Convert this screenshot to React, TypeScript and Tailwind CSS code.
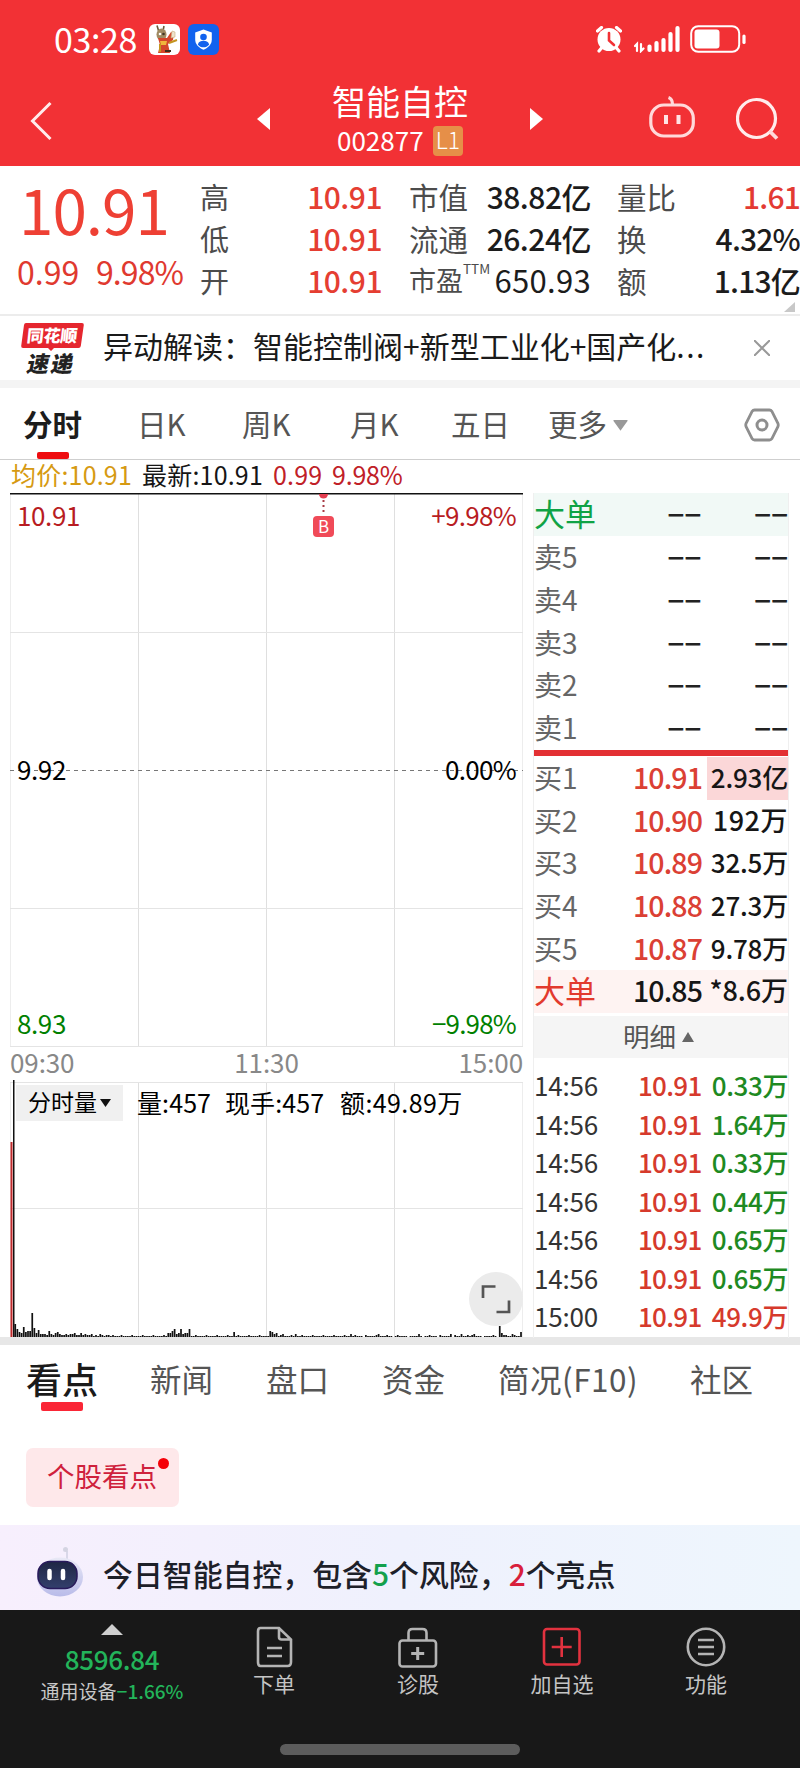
import React from "react";

type Quote = { label: string; value: string; tone?: string; note?: string };

const highLow: Quote[] = [
  { label: "高", value: "10.91" },
  { label: "低", value: "10.91" },
  { label: "开", value: "10.91" },
];
const market: Quote[] = [
  { label: "市值", value: "38.82亿", tone: "font-medium tracking-[-0.5px]" },
  { label: "流通", value: "26.24亿", tone: "font-medium tracking-[-0.5px]" },
  { label: "市盈", value: "650.93", note: "TTM", tone: "text-[31px] tracking-[0.3px]" },
];
const ratio: Quote[] = [
  { label: "量比", value: "1.61", tone: "text-[#e33a33]" },
  { label: "换", value: "4.32%", tone: "text-[#1c1c1c]" },
  { label: "额", value: "1.13亿", tone: "text-[#1c1c1c]" },
];
const sells = ["卖5", "卖4", "卖3", "卖2", "卖1"];
const buys = [
  ["买1", "10.91", "2.93亿"],
  ["买2", "10.90", "192万"],
  ["买3", "10.89", "32.5万"],
  ["买4", "10.88", "27.3万"],
  ["买5", "10.87", "9.78万"],
];
const ticks = [
  ["14:56", "10.91", "0.33万"],
  ["14:56", "10.91", "1.64万"],
  ["14:56", "10.91", "0.33万"],
  ["14:56", "10.91", "0.44万"],
  ["14:56", "10.91", "0.65万"],
  ["14:56", "10.91", "0.65万"],
  ["15:00", "10.91", "49.9万"],
];

const opening = [13, 8, 5, 4, 10, 5, 6, 6, 24, 9, 4, 7, 3, 3, 3, 2, 6, 3, 2, 4, 5, 3, 2, 2, 3, 2, 3, 3, 4, 2, 2, 4, 2, 3, 2, 2, 3, 1, 2, 1, 3, 2, 1, 2, 2, 1, 2];
const spikes: Record<number, number> = {
  72: 4, 73: 4, 74: 6, 75: 8, 76: 3, 77: 4, 78: 8, 79: 3, 80: 4, 81: 4, 82: 8,
  103: 5, 120: 6, 121: 5, 122: 3, 123: 4, 126: 3, 130: 2, 132: 3,
  158: 3, 171: 3, 190: 3, 205: 3, 207: 2, 210: 3, 213: 2, 216: 3,
  228: 11, 229: 4, 231: 2, 234: 3, 238: 5,
};
const volume: number[] = Array.from({ length: 239 }, (_, i) => {
  if (i < opening.length) return opening[i];
  if (spikes[i]) return spikes[i];
  if (i > 160 && i % 7 === 3) return 0;
  return i % 5 === 0 ? 2 : 1;
});

function StatusBar() {
  return (
    <div className="flex h-[78px] items-center pl-[54px]">
      <span className="w-[95px] text-[34px] leading-[70px] tracking-[-0.4px] text-white">03:28</span>
      <svg width="31" height="31" viewBox="0 0 31 31">
        <rect width="31" height="31" rx="6" fill="#fff" />
        <path d="M8 1.5l1.5 5M15 2l-1 5" stroke="#6b5a3c" strokeWidth="1.6" />
        <ellipse cx="12.5" cy="10.5" rx="5" ry="6" fill="#a08a62" />
        <circle cx="11" cy="10" r="1.3" fill="#fff" />
        <circle cx="14.5" cy="10" r="1.3" fill="#423626" />
        <path d="M9 14h9l4-6 3 1-1 7-5 4 2 9H9l2-8z" fill="#d4462b" />
        <path d="M11 17h7l-1 4h-5z" fill="#f0b63c" />
        <path d="M23 7l3 1v5l-4 1z" fill="#eee3cc" stroke="#c9ad7c" strokeWidth=".6" />
        <path d="M11 20v8M20 19l8-3" stroke="#c4941f" strokeWidth="2" />
        <path d="M16 27h6" stroke="#3d2b1b" strokeWidth="2" />
      </svg>
      <svg className="ml-[8px]" width="31" height="31" viewBox="0 0 31 31">
        <rect width="31" height="31" rx="6" fill="#1262ee" />
        <path d="M15.5 5.5l8.3 3v7c0 5-3.5 8-8.3 10.300C10.700 23.500 7.200 20.500 7.200 15.500v-7z" fill="#fff" />
        <circle cx="15.500" cy="13" r="3.300" fill="#1262ee" />
        <path d="M9.800 20.500c1-3 3.300-3.700 5.700-3.700s4.700.7 5.700 3.700c-1.600 2-3.500 2.800-5.700 2.800s-4.200-.8-5.700-2.800z" fill="#1262ee" />
      </svg>
      <svg className="ml-[377px]" width="26" height="27" viewBox="0 0 26 27">
        <circle cx="13" cy="13.500" r="11.500" fill="#fff" />
        <path d="M1.500 5l4-3.500M24.500 5l-4-3.500M5.500 22l-2.500 3M20.500 22l2.500 3" stroke="#fff" strokeWidth="3.200" strokeLinecap="round" />
        <path d="M13 7v7.500l5 4.500" stroke="#f23135" strokeWidth="2.600" fill="none" strokeLinecap="round" />
      </svg>
      <svg className="ml-[12px]" width="47" height="28" viewBox="0 0 47 28">
        <g stroke="#fff" strokeLinecap="round">
          <path strokeWidth="2.200" fill="none" d="M1 21l2-2v7M7 19v7l2.500-2.500" />
          <path strokeWidth="4.200" d="M15.500 21.500v3.500M22.500 18v7M29.500 15v10M36.500 9v16M43.500 3v22" />
        </g>
      </svg>
      <svg className="ml-[9px]" width="56" height="28" viewBox="0 0 56 28">
        <rect x="1.200" y="1.200" width="48" height="25.600" rx="7" fill="none" stroke="#fff" strokeWidth="2" />
        <rect x="4.500" y="4.500" width="25" height="19" rx="3" fill="#fff" />
        <path d="M54 11v6.500" stroke="#fff" strokeWidth="3.200" strokeLinecap="round" />
      </svg>
    </div>
  );
}

function TitleBar() {
  return (
    <div className="flex h-[88px] pl-[30px]">
      <svg className="mt-[23px]" width="22" height="40" viewBox="0 0 22 40">
        <path d="M20.500 2L2.500 20l18 18" fill="none" stroke="#ffecec" strokeWidth="3" />
      </svg>
      <svg className="ml-[205px] mt-[30px]" width="13" height="22" viewBox="0 0 13 22">
        <path d="M13 0v22L0 11z" fill="#fff" />
      </svg>
      <div className="ml-[62px] w-[138px] text-white">
        <div className="h-[46px] whitespace-nowrap text-[34px] leading-[46px]">智能自控</div>
        <div className="mt-[1px] flex h-[32px] items-center pl-[5px]">
          <span className="w-[96px] text-[26px] leading-[24px]">
            <span className="relative top-[-1px]">002877</span>
          </span>
          <span className="h-[30px] w-[30px] rounded-[4px] bg-[#e68f48] text-center text-[23px] font-light leading-[27px]">L1</span>
        </div>
      </div>
      <svg className="ml-[60px] mt-[30px]" width="13" height="22" viewBox="0 0 13 22">
        <path d="M0 0v22l13-11z" fill="#fff" />
      </svg>
      <svg className="ml-[106px] mt-[18px]" width="46" height="42" viewBox="0 0 46 42">
        <g fill="none" stroke="#ffd9da" strokeWidth="3.200">
          <rect x="1.800" y="9" width="42.500" height="31" rx="13" />
          <path d="M19.500 1.500c3 1 4 3.500 4 7" />
        </g>
        <path d="M17 19v9M29.500 19v9" stroke="#ffe3e4" strokeWidth="4" />
      </svg>
      <svg className="ml-[41px] mt-[19px]" width="43" height="44" viewBox="0 0 43 44">
        <circle cx="20.500" cy="21.500" r="19" fill="none" stroke="#ffecec" strokeWidth="3.200" />
        <path d="M33.500 34l7.500 7.500" stroke="#ffd9da" strokeWidth="3.800" />
      </svg>
    </div>
  );
}

function QuotePanel() {
  return (
    <div className="flex h-[150px] border-b-2 border-[#ececec] pt-[9px] text-[30px] text-[#4c4c4c]">
      <div className="w-[200px] text-[#ee4034]">
        <div className="h-[67px] pl-[19px] text-[62px] leading-[66px] tracking-[-1px]">10.91</div>
        <div className="flex pl-[17px] text-[32px] leading-[58px] text-[#e0392f]">
          <span className="w-[79px]">0.99</span>
          <span className="tracking-[-0.9px]">9.98%</span>
        </div>
      </div>
      <div className="w-[182px] leading-[42px]">
        {highLow.map((q) => (
          <div key={q.label} className="flex h-[42px] justify-between">
            <span className="text-[29px]">{q.label}</span>
            <span className="font-medium tracking-[-0.5px] text-[#e53e32]">{q.value}</span>
          </div>
        ))}
      </div>
      <div className="ml-[27px] w-[182px] leading-[42px]">
        {market.map((q) => (
          <div key={q.label} className="flex h-[42px] justify-between">
            <span className={q.note ? "flex text-[27px]" : "text-[29.500px]"}>
              {q.label}
              {q.note && <span className="text-[13.500px] leading-[18px]">{q.note}</span>}
            </span>
            <span className={`whitespace-nowrap text-[#1c1c1c] ${q.tone}`}>{q.value}</span>
          </div>
        ))}
      </div>
      <div className="relative ml-[26px] w-[183px] leading-[42px]">
        {ratio.map((q) => (
          <div key={q.label} className="flex h-[42px] justify-between">
            <span className="text-[29.500px]">{q.label}</span>
            <span className={`font-medium tracking-[-0.8px] ${q.tone}`}>{q.value}</span>
          </div>
        ))}
        <svg className="absolute right-[5px] top-[127px]" width="11" height="10" viewBox="0 0 11 10">
          <path d="M11 0v10H0z" fill="#c8c8c8" />
        </svg>
      </div>
    </div>
  );
}

function NewsRow() {
  return (
    <div className="flex h-[64px] items-center pl-[21px]">
      <div className="relative h-[51px] w-[63px]">
        <svg className="absolute inset-0" width="63" height="51" viewBox="0 0 63 51">
          <path d="M5 0h56q2 0 1.800 2l-3 21q-.3 2-2.300 2H33l-3 3-3-3H2q-2 0-1.800-2L3 2q.3-2 2-2z" fill="#e5262e" />
        </svg>
        <div className="absolute left-[6px] top-[1px] -skew-x-6 text-[17px] font-black leading-[22px] tracking-[-0.3px] text-white">同花顺</div>
        <div className="absolute left-[7px] top-[27px] -skew-x-12 whitespace-nowrap text-[22px] font-black leading-[24px] tracking-[2px] text-[#222]">速递</div>
      </div>
      <div className="ml-[19px] h-[56px] w-[620px] whitespace-nowrap text-[30px] leading-[51px] text-[#1a1a1a]">
        异动解读：智能控制阀+新型工业化+国产化<span className="tracking-[1.500px]">...</span>
      </div>
      <svg className="ml-[31px]" width="16" height="16" viewBox="0 0 16 16">
        <path d="M0 0l16 16M16 0L0 16" stroke="#999" strokeWidth="2" />
      </svg>
    </div>
  );
}

function PeriodTabs() {
  return (
    <div className="flex h-[72px] border-b border-[#cfcfcf] pl-[23px] text-[29.500px] leading-[71px] text-[#555]">
      <div className="relative w-[114px] font-bold text-[#1c1c1c]">
        分时
        <div className="absolute left-[14px] top-[64px] h-[7px] w-[32px] rounded-[2px] bg-[#ee0d10]" />
      </div>
      <div className="w-[105px]">日K</div>
      <div className="w-[108px]">周K</div>
      <div className="w-[101px]">月K</div>
      <div className="w-[97px]">五日</div>
      <div className="w-[65px]">更多</div>
      <svg className="mt-[32px]" width="15" height="11" viewBox="0 0 15 11">
        <path d="M1 0h13q1 0 .5 1L8 10q-.5 1-1 0L.5 1Q0 0 1 0z" fill="#999" />
      </svg>
      <svg className="ml-[116px] mt-[20px]" width="36" height="34" viewBox="0 0 36 34">
        <path d="M10.500 2h15q1.500 0 2.300 1.200l6 12q.9 1.800 0 3.600l-6 12Q27 32 25.500 32h-15Q9 32 8.200 30.800l-6-12q-.9-1.800 0-3.600l6-12Q9 2 10.500 2z" fill="none" stroke="#8e8e8e" strokeWidth="2.800" />
        <circle cx="18" cy="17" r="5" fill="none" stroke="#8e8e8e" strokeWidth="3" />
      </svg>
    </div>
  );
}

function PriceChart() {
  return (
    <div className="relative h-[554px] text-[26px] leading-[32px] tracking-[-0.4px]">
      <svg className="absolute inset-0" width="513" height="554" viewBox="0 0 513 554">
        <path d="M.5 0v554M512.500 0v554" stroke="#ededed" />
        <path d="M128.500 0v554M256.500 0v554M384.500 0v554" stroke="#dfdfdf" />
        <path d="M0 139.500h513M0 415.500h513M0 553.500h513" stroke="#e4e4e4" />
        <path d="M0 277.500h513" stroke="#777" strokeDasharray="4 4" />
        <path d="M0 .75h513" stroke="#111" strokeWidth="1.500" />
        <path d="M313.500 7v15" stroke="#a83b45" strokeWidth="2" strokeDasharray="2 3" />
        <path d="M309 1h9a4.500 4.500 0 0 1-9 0z" fill="#e33e50" />
      </svg>
      <div className="absolute left-[7px] top-[6px] text-[#b81c22]">10.91</div>
      <div className="absolute right-[7px] top-[6px] tracking-[-0.7px] text-[#b81c22]">+9.98%</div>
      <div className="absolute left-[303px] top-[23px] h-[21px] w-[21px] rounded-[4px] bg-[#f04a58] text-center text-[17px] leading-[20px] text-white">B</div>
      <div className="absolute left-[7px] top-[260px] text-black">9.92</div>
      <div className="absolute right-[7px] top-[260px] tracking-[-0.7px] text-black">0.00%</div>
      <div className="absolute left-[7px] top-[514px] text-[#008000]">8.93</div>
      <div className="absolute right-[7px] top-[514px] tracking-[-0.8px] text-[#008000]">−9.98%</div>
    </div>
  );
}

function VolumeChart() {
  return (
    <div className="relative h-[257px]">
      <svg className="absolute inset-0" width="513" height="257" viewBox="0 0 513 257">
        <path d="M.5 2v255M512.500 2v255" stroke="#ededed" />
        <path d="M128.500 2v255M256.500 2v255M384.500 2v255" stroke="#dfdfdf" />
        <path d="M0 2.500h513M0 128.500h513" stroke="#e4e4e4" />
        <rect x="0.500" y="62" width="2" height="195" fill="#c0292b" />
        <rect x="3" y="0" width="1.500" height="257" fill="#111" />
        {volume.map((h, i) => (
          <rect key={i} x={4.400 + i * 2.125} y={257 - h} width="1.700" height={h} fill="#111" />
        ))}
      </svg>
      <div className="absolute left-[6px] top-[5px] flex h-[36px] w-[107px] items-center bg-[#f0f0f0] pl-[12px] text-[23px] leading-[28px] text-black">
        <span className="relative top-[-2px]">分时量</span>
        <svg className="ml-[3px]" width="11" height="8" viewBox="0 0 11 8">
          <path d="M0 0h11L5.500 8z" fill="#111" />
        </svg>
      </div>
      <div className="absolute left-[127px] top-[5px] flex whitespace-nowrap text-[25px] leading-[34px] tracking-[0.1px] text-black">
        <span className="w-[88px]">量:457</span>
        <span className="w-[115px]">现手:457</span>
        <span className="tracking-[0.4px]">额:49.89万</span>
      </div>
      <svg className="absolute left-[459px] top-[192px]" width="54" height="54" viewBox="0 0 54 54">
        <circle cx="27" cy="27" r="27" fill="#ebebeb" />
        <path d="M14 26V14.500h12.500M40 28.500V40H27.500" fill="none" stroke="#555" strokeWidth="2.700" />
      </svg>
    </div>
  );
}

function Blank() {
  return (
    <>
      <span className="w-[87px] whitespace-nowrap text-[29.500px] font-medium text-[#222]">−−</span>
      <span className="whitespace-nowrap text-[29.500px] font-medium text-[#222]">−−</span>
    </>
  );
}

function OrderBook() {
  return (
    <div className="ml-[10px] mt-[33px] h-[845px] w-[256px] border-x border-[#efefef] text-[28px] text-[#666]">
      <div className="flex h-[43px] bg-[#f1f9f6] leading-[40px]">
        <span className="w-[134px] text-[31px] leading-[39px] text-[#0fa345]">大单</span>
        <Blank />
      </div>
      {sells.map((s) => (
        <div key={s} className="flex h-[42.800px] leading-[40px]">
          <span className="w-[134px]">{s}</span>
          <Blank />
        </div>
      ))}
      <div className="h-[6px] bg-[#e33033]" />
      <div className="h-[1px]" />
      {buys.map(([label, price, amount], i) => (
        <div key={label} className="flex h-[42.700px] leading-[40px]">
          <span className="w-[99px]">{label}</span>
          <span className="w-[74px] whitespace-nowrap text-[28.500px] font-medium tracking-[-0.9px] text-[#db4034]">{price}</span>
          <span className={`flex-1 whitespace-nowrap text-right font-medium text-[#161616] ${i === 1 ? "text-[27px] tracking-[0.5px]" : "text-[26px] tracking-[-0.2px]"} ${i === 0 ? "bg-[#fbd7d8]" : ""}`}>{amount}</span>
        </div>
      ))}
      <div className="flex h-[43px] bg-[#fef3f2] leading-[40px]">
        <span className="w-[99px] text-[31px] leading-[39px] text-[#e23a2e]">大单</span>
        <span className="w-[74px] whitespace-nowrap text-[28.500px] font-medium tracking-[-0.900px] text-[#161616]">10.85</span>
        <span className="flex-1 whitespace-nowrap text-right text-[27px] font-medium tracking-[-0.100px] text-[#161616]">*8.6万</span>
      </div>
      <div className="mt-[3px] flex h-[42px] items-center bg-[#f5f5f5] pl-[89px] text-[26.500px] leading-[38px] text-[#555]">
        <span className="relative top-[-1px]">明细</span>
        <svg className="ml-[6px]" width="12" height="10" viewBox="0 0 12 10">
          <path d="M6 0l6 10H0z" fill="#666" />
        </svg>
      </div>
      <div className="mt-[8px] text-[26px] font-medium leading-[38px]">
        {ticks.map(([time, price, amount], i) => (
          <div key={i} className="flex h-[38.500px] tracking-[-0.4px]">
            <span className="w-[104px] font-normal tracking-[-0.2px] text-[#333]">{time}</span>
            <span className="w-[66px] tracking-[-0.7px] text-[#d63a2c]">{price}</span>
            <span className={`flex-1 whitespace-nowrap text-right ${i === 6 ? "text-[#d63a2c]" : "text-[#1e8a22]"}`}>{amount}</span>
          </div>
        ))}
      </div>
    </div>
  );
}

function InfoTabs() {
  return (
    <div className="h-[180px]">
      <div className="flex h-[103px] pl-[26px] text-[31.500px] leading-[67px] text-[#555]">
        <div className="relative w-[124px] text-[36px] font-medium text-[#1a1a1a]">
          看点
          <div className="absolute left-[15px] top-[57px] h-[9px] w-[42px] rounded-[2px] bg-[#fa2636]" />
        </div>
        <div className="w-[116px]">新闻</div>
        <div className="w-[116px]">盘口</div>
        <div className="w-[116px]">资金</div>
        <div className="w-[192px] tracking-[0.5px]">简况(F10)</div>
        <div>社区</div>
      </div>
      <div className="relative ml-[26px] h-[59px] w-[153px] rounded-[7px] bg-[#fee8ea] pl-[21px] text-[27.500px] leading-[55px] text-[#cf213c]">
        个股看点
        <div className="absolute left-[132px] top-[10px] h-[11px] w-[11px] rounded-full bg-[#f50008]" />
      </div>
    </div>
  );
}

function Insight() {
  return (
    <div className="flex h-[85px] bg-gradient-to-r from-[#f7effd] via-[#eff1fd] to-[#eef6fd] pl-[36px]">
      <svg className="mt-[21px]" width="48" height="52" viewBox="0 0 48 52">
        <defs>
          <linearGradient id="shell" x1="0" y1="0" x2="0" y2="1">
            <stop offset="0" stopColor="#e9e9f6" />
            <stop offset="1" stopColor="#b9bbe9" />
          </linearGradient>
          <linearGradient id="face" x1="0" y1="0" x2="0" y2="1">
            <stop offset="0" stopColor="#1f2744" />
            <stop offset="1" stopColor="#333f6c" />
          </linearGradient>
        </defs>
        <path d="M31 5v9" stroke="#cfd0e2" strokeWidth="1.500" />
        <circle cx="29.500" cy="3.500" r="2.500" fill="#d4d4e2" />
        <ellipse cx="24" cy="31" rx="23" ry="19.500" fill="url(#shell)" />
        <rect x="2" y="15.500" width="39" height="27" rx="12" fill="url(#face)" stroke="#281a5b" strokeWidth="1.500" />
        <path d="M13.500 25v7M27 25v7" stroke="#fff" strokeWidth="4.500" strokeLinecap="round" />
      </svg>
      <div className="ml-[19px] whitespace-nowrap text-[29.900px] font-medium leading-[96px] text-[#1d2029]">
        今日智能自控，包含<span className="text-[#13a04c]">5</span>个风险，<span className="text-[#d81f3c]">2</span>个亮点
      </div>
    </div>
  );
}

function NavItem({ label, children }: { label: string; children: React.ReactNode }) {
  return (
    <div className="flex w-[144px] flex-col items-center pt-[16px] text-[21px] leading-[30px] text-[#c4c4c4]">
      <svg width="42" height="42" viewBox="0 0 42 42" fill="none" stroke="#b4b4b4" strokeWidth="2.600">
        {children}
      </svg>
      {label}
    </div>
  );
}

function BottomBar() {
  return (
    <div className="h-[158px] bg-[#181818]">
      <div className="flex h-[134px]">
        <div className="flex w-[202px] flex-col items-center pl-[22px] pt-[14px]">
          <svg width="22" height="11" viewBox="0 0 22 11">
            <path d="M11 0l11 11H0z" fill="#cfcfcf" />
          </svg>
          <div className="mt-[8px] text-[26px] font-medium leading-[32px] tracking-[-0.3px] text-[#23b45a]">8596.84</div>
          <div className="whitespace-nowrap text-[19px] leading-[32px] text-[#c8c8c8]">
            通用设备<span className="text-[19px] font-medium text-[#23b45a]">−1.66%</span>
          </div>
        </div>
        <NavItem label="下单">
          <path d="M7.500 2h18.500l12 11.500V36q0 4-3.500 4h-27Q5 40 5 36V5.500Q5 2 7.500 2zM26 2v9q0 2.500 2.500 2.500H38M14 22h15M14 30h15" />
        </NavItem>
        <NavItem label="诊股">
          <rect x="2.500" y="14.500" width="36.500" height="26" rx="3" />
          <path d="M11.500 14V7q0-4 4-4h10q4 0 4 4v7" />
          <path strokeWidth="3" d="M20.700 21v13M14.200 27.500h13" />
        </NavItem>
        <NavItem label="加自选">
          <g stroke="#e2323f">
            <rect x="3" y="3" width="35.500" height="35.500" rx="3" />
            <path d="M20.700 11v20M10.700 21h20" />
          </g>
        </NavItem>
        <NavItem label="功能">
          <circle cx="21" cy="21" r="18.200" />
          <path d="M13 14h16M13 21h16M13 28h16" />
        </NavItem>
      </div>
      <div className="mx-auto h-[11px] w-[240px] rounded-full bg-[#5c5c5c]" />
    </div>
  );
}

export default function App() {
  return (
    <div lang="zh-CN" className="h-[1768px] w-[800px] overflow-hidden bg-white font-['Noto_Sans_CJK_SC','Noto_Sans',sans-serif]">
      <header className="h-[166px] bg-[#f23135]">
        <StatusBar />
        <TitleBar />
      </header>
      <QuotePanel />
      <NewsRow />
      <div className="h-[8px] bg-[#f4f4f4]" />
      <PeriodTabs />
      <div className="flex h-[877px] pl-[10px]">
        <div className="w-[513px]">
          <div className="flex h-[33px] whitespace-nowrap pl-[1px] text-[25px] leading-[28px] tracking-[0.2px]">
            <span className="w-[131px] text-[#d69a12]">均价:10.91</span>
            <span className="w-[131px] text-[#161616]">最新:10.91</span>
            <span className="w-[59px] text-[#c02027]">0.99</span>
            <span className="tracking-[-0.2px] text-[#c02027]">9.98%</span>
          </div>
          <PriceChart />
          <div className="flex h-[33px] justify-between text-[26px] leading-[30px] tracking-[-0.1px] text-[#888]">
            <span>09:30</span>
            <span>11:30</span>
            <span>15:00</span>
          </div>
          <VolumeChart />
        </div>
        <OrderBook />
      </div>
      <div className="h-[8px] bg-[#e7e7e7]" />
      <InfoTabs />
      <Insight />
      <BottomBar />
    </div>
  );
}
